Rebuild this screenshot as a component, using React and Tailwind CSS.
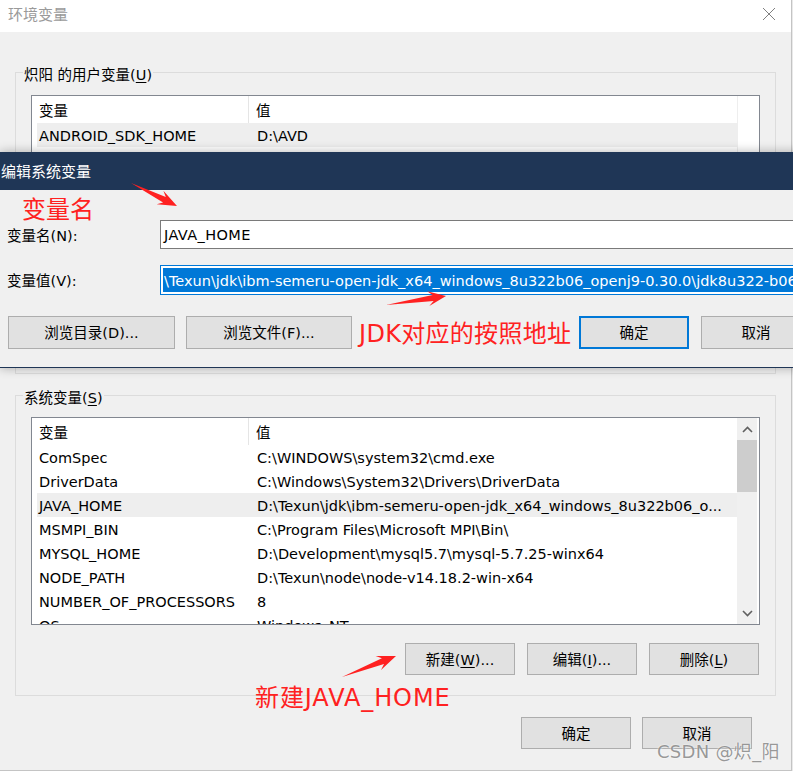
import React from "react";

function arrowPoints(tx, ty, px, py, headLen = 16, headW = 15, shaftW = 6) {
  const dx = px - tx;
  const dy = py - ty;
  const L = Math.hypot(dx, dy);
  const ux = dx / L;
  const uy = dy / L;
  const nx = -uy;
  const ny = ux;
  const bx = px - ux * headLen;
  const by = py - uy * headLen;
  const pts = [
    [tx, ty],
    [bx + ux * 3 + (nx * shaftW) / 2, by + uy * 3 + (ny * shaftW) / 2],
    [bx - ux * 2 + (nx * headW) / 2, by - uy * 2 + (ny * headW) / 2],
    [px, py],
    [bx - ux * 2 - (nx * headW) / 2, by - uy * 2 - (ny * headW) / 2],
    [bx + ux * 3 - (nx * shaftW) / 2, by + uy * 3 - (ny * shaftW) / 2],
  ];
  return pts.map((p) => p.map((v) => v.toFixed(1)).join(",")).join(" ");
}

function U({ children }) {
  return <span className="underline underline-offset-2 decoration-1">{children}</span>;
}

function Btn({ children, primary = false, className = "" }) {
  return (
    <div
      className={`flex items-center justify-center pt-[3px] bg-[#e1e1e1] text-black ${
        primary ? "border-2 border-[#0078d7]" : "border border-[#adadad]"
      } ${className}`}
    >
      {children}
    </div>
  );
}

function Group({ label, className = "", children }) {
  return (
    <div className={`mx-[15px] border border-[#dcdcdc] ${className}`}>
      <div className="-mt-[10px] ml-[7px] w-fit bg-[#f0f0f0] px-[1px] pt-[2px] leading-[20px]">{label}</div>
      {children}
    </div>
  );
}

function Header() {
  return (
    <div className="flex h-[27px] items-stretch">
      <div className="flex w-[212px] items-center border-r border-[#e5e5e5] pl-[2px] pt-[4px]">变量</div>
      <div className="flex items-center pl-[7px] pt-[4px]">值</div>
    </div>
  );
}

function Row({ name, value, hl = false }) {
  return (
    <div className={`flex h-[24px] items-center whitespace-nowrap pt-[4px] ${hl ? "bg-[#eeeeee]" : ""}`}>
      <div className="w-[212px] shrink-0 overflow-hidden pl-[2px]">{name}</div>
      <div className="min-w-0 flex-1 overflow-hidden pl-[8px]">{value}</div>
    </div>
  );
}

const sysVars = [
  ["ComSpec", "C:\\WINDOWS\\system32\\cmd.exe"],
  ["DriverData", "C:\\Windows\\System32\\Drivers\\DriverData"],
  ["JAVA_HOME", "D:\\Texun\\jdk\\ibm-semeru-open-jdk_x64_windows_8u322b06_o...", true],
  ["MSMPI_BIN", "C:\\Program Files\\Microsoft MPI\\Bin\\"],
  ["MYSQL_HOME", "D:\\Development\\mysql5.7\\mysql-5.7.25-winx64"],
  ["NODE_PATH", "D:\\Texun\\node\\node-v14.18.2-win-x64"],
  ["NUMBER_OF_PROCESSORS", "8"],
  ["OS", "Windows_NT"],
  ["Path", "C:\\WINDOWS\\system32;C:\\WINDOWS;"],
];

const userVars = [
  ["ANDROID_SDK_HOME", "D:\\AVD", true],
  ["OneDrive", "C:\\Users\\炽阳\\OneDrive"],
  ["Path", "C:\\Users\\炽阳\\AppData\\Local\\Microsoft\\WindowsApps;"],
  ["TEMP", "C:\\Users\\炽阳\\AppData\\Local\\Temp"],
  ["TMP", "C:\\Users\\炽阳\\AppData\\Local\\Temp"],
];

function Chevron({ up }) {
  return (
    <svg width="11" height="7" viewBox="0 0 11 7">
      <path
        d={up ? "M1 6 L5.5 1.5 L10 6" : "M1 1 L5.5 5.5 L10 1"}
        fill="none"
        stroke="#606060"
        strokeWidth="1.6"
      />
    </svg>
  );
}

export default function App() {
  return (
    <div className="relative h-[771px] w-[793px] overflow-hidden bg-[#e9e9e9] font-['DejaVu_Sans','Noto_Sans_CJK_SC',sans-serif] text-[14.5px] text-black">
      {/* Main window: 环境变量 */}
      <div className="flex h-[771px] w-[792px] flex-col border-r border-b border-[#c4c4c4] bg-[#f0f0f0]">
        <div className="flex h-[32px] shrink-0 items-center justify-between bg-white pb-[4px] pl-[8px] pr-[15px]">
          <span className="pt-[2px] text-[15px] text-[#9a9a9a]">环境变量</span>
          <svg width="14" height="14" viewBox="0 0 14 14">
            <path d="M1 1 L13 13 M13 1 L1 13" stroke="#808080" strokeWidth="1" fill="none" />
          </svg>
        </div>

        {/* User variables */}
        <Group
          className="mt-[40px] h-[302px] shrink-0"
          label={
            <>
              炽阳 的用户变量(<U>U</U>)
            </>
          }
        >
          <div className="mx-[15px] mt-[10px] flex h-[216px] overflow-hidden border border-[#828790] bg-white">
            <div className="min-w-0 flex-1 pl-[5px]">
              <Header />
              {userVars.map(([n, v, hl]) => (
                <Row key={n} name={n} value={v} hl={hl} />
              ))}
            </div>
            <div className="w-[22px] shrink-0 border-l border-[#eeeeee] bg-white" />
          </div>
          <div className="mt-[19px] flex justify-end gap-3 pr-[16px]">
            <Btn className="h-[32px] w-[110px]">
              新建(<U>N</U>)...
            </Btn>
            <Btn className="h-[32px] w-[110px]">
              编辑(<U>E</U>)...
            </Btn>
            <Btn className="h-[32px] w-[110px]">
              删除(<U>D</U>)
            </Btn>
          </div>
        </Group>

        {/* System variables */}
        <Group
          className="mt-[21px] shrink-0 pb-[20px]"
          label={
            <>
              系统变量(<U>S</U>)
            </>
          }
        >
          <div className="mx-[15px] mt-[9px] flex h-[208px] overflow-hidden border border-[#828790] bg-white">
            <div className="min-w-0 flex-1 pl-[5px]">
              <Header />
              {sysVars.map(([n, v, hl]) => (
                <Row key={n} name={n} value={v} hl={hl} />
              ))}
            </div>
            <div className="mr-[2px] flex w-[20px] shrink-0 flex-col bg-[#f0f0f0]">
              <div className="flex h-[22px] items-center justify-center">
                <Chevron up />
              </div>
              <div className="h-[52px] bg-[#cdcdcd]" />
              <div className="flex-1" />
              <div className="flex h-[22px] items-center justify-center">
                <Chevron />
              </div>
            </div>
          </div>
          <div className="mt-[18px] flex justify-end gap-3 pr-[16px]">
            <Btn className="h-[32px] w-[110px]">
              新建(<U>W</U>)...
            </Btn>
            <Btn className="h-[32px] w-[110px]">
              编辑(<U>I</U>)...
            </Btn>
            <Btn className="h-[32px] w-[110px]">
              删除(<U>L</U>)
            </Btn>
          </div>
        </Group>

        <div className="mt-[21px] flex justify-end gap-[11px] pr-[39px]">
          <Btn className="h-[32px] w-[110px]">确定</Btn>
          <Btn className="h-[32px] w-[110px]">取消</Btn>
        </div>
      </div>

      {/* Edit dialog: 编辑系统变量 (window on top) */}
      <div className="absolute left-0 top-[152px] w-[822px] shadow-[0_0_10px_rgba(0,0,0,0.3)]">
        <div className="flex h-[38px] items-center bg-[#1f3656] pl-[1px] pt-[2px] text-[15px] text-white">编辑系统变量</div>
        <div className="flex h-[178px] flex-col border-b border-[#1f3656] bg-[#f0f0f0] pr-[11px] pt-[30px]">
          <div className="flex h-[29px] items-center">
            <div className="w-[160px] shrink-0 pl-[7px] pt-[5px]">变量名(N):</div>
            <div className="flex h-full flex-1 items-center border border-[#7a7a7a] bg-white pl-[3px] pt-[3px] tracking-[0.4px]">JAVA_HOME</div>
          </div>
          <div className="mt-[16px] flex h-[30px] items-center">
            <div className="w-[160px] shrink-0 pl-[7px] pt-[3px]">变量值(V):</div>
            <div className="flex h-full min-w-0 flex-1 items-center overflow-hidden border border-[#0078d7] bg-white pl-[2px]">
              <span className="whitespace-nowrap bg-[#0078d7] pl-[1px] pt-[2px] leading-[22px] text-white">
                \Texun\jdk\ibm-semeru-open-jdk_x64_windows_8u322b06_openj9-0.30.0\jdk8u322-b06
              </span>
            </div>
          </div>
          <div className="mt-[21px] flex h-[33px] items-stretch">
            <div className="flex gap-[11px] pl-[8px]">
              <Btn className="w-[167px]">浏览目录(D)...</Btn>
              <Btn className="w-[166px]">浏览文件(F)...</Btn>
            </div>
            <div className="flex-1" />
            <div className="flex gap-[12px]">
              <Btn primary className="w-[110px]">
                确定
              </Btn>
              <Btn className="w-[110px]">取消</Btn>
            </div>
          </div>
        </div>
      </div>

      {/* Red annotations */}
      <div className="absolute left-[22px] top-[195px] text-[24px] leading-[30px] text-[#ff2121]">变量名</div>
      <div className="absolute left-[359px] top-[319px] text-[24px] leading-[30px] text-[#ff2121] tracking-[0.3px]">JDK对应的按照地址</div>
      <div className="absolute left-[255px] top-[683px] text-[24px] leading-[30px] text-[#ff2121] tracking-[0.9px]">新建JAVA_HOME</div>

      <svg className="pointer-events-none absolute left-0 top-0" width="793" height="771" viewBox="0 0 793 771">
        <polygon points={arrowPoints(131, 183, 177, 206, 17, 15, 6)} fill="#ff2121" />
        <polygon points={arrowPoints(386, 305, 446, 296, 16, 15, 6)} fill="#ff2121" />
        <polygon points={arrowPoints(342, 677, 396, 656, 17, 15, 6)} fill="#ff2121" />
      </svg>

      {/* Watermark */}
      <div className="absolute left-[657px] top-[740px] text-[18px] leading-[24px] tracking-[0.3px] text-[rgba(120,120,120,0.75)] [text-shadow:0_0_2px_#ffffff]">
        CSDN @炽_阳
      </div>
    </div>
  );
}
